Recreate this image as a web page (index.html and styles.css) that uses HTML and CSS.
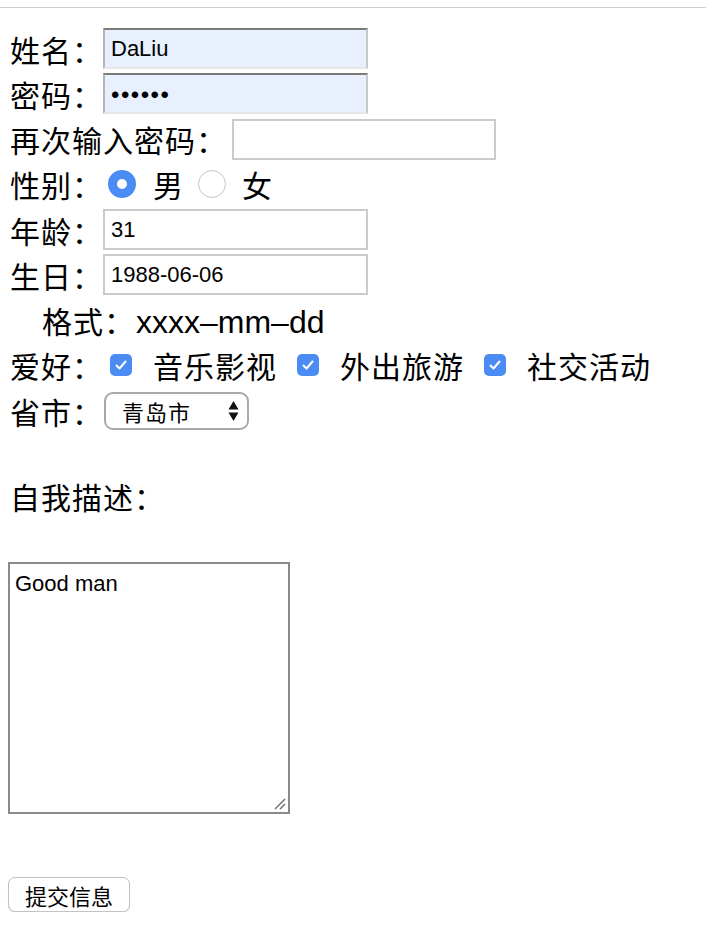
FILE: index.html
```html
<!DOCTYPE html>
<html lang="zh">
<head>
<meta charset="utf-8">
<title>注册</title>
<link rel="stylesheet" href="styles.css">
</head>
<body>
<div class="topline"></div>
<form class="form">
  <div class="row"><span class="lbl">姓名：</span><span class="field auto w-name">DaLiu</span></div>
  <div class="row"><span class="lbl">密码：</span><span class="field auto dots w-name">••••••</span></div>
  <div class="row"><span class="lbl">再次输入密码：</span><span class="field plain w-re"></span></div>
  <div class="row"><span class="lbl">性别：</span>
    <span class="radio on"></span><span class="opt">男</span>
    <span class="radio off"></span><span class="opt">女</span>
  </div>
  <div class="row"><span class="lbl">年龄：</span><span class="field plain w-name">31</span></div>
  <div class="row"><span class="lbl">生日：</span><span class="field plain w-name">1988-06-06</span></div>
  <div class="row"><span class="fmt">格式：<span class="latin">xxxx–mm–dd</span></span></div>
  <div class="row"><span class="lbl">爱好：</span>
    <span class="check"><svg viewBox="0 0 22 22" width="22" height="22"><polyline points="6.5,11.5 9.5,14.5 15.5,7.5" fill="none" stroke="#fff" stroke-width="2" stroke-linecap="round" stroke-linejoin="round"/></svg></span><span class="opt wide">音乐影视</span>
    <span class="check"><svg viewBox="0 0 22 22" width="22" height="22"><polyline points="6.5,11.5 9.5,14.5 15.5,7.5" fill="none" stroke="#fff" stroke-width="2" stroke-linecap="round" stroke-linejoin="round"/></svg></span><span class="opt wide">外出旅游</span>
    <span class="check"><svg viewBox="0 0 22 22" width="22" height="22"><polyline points="6.5,11.5 9.5,14.5 15.5,7.5" fill="none" stroke="#fff" stroke-width="2" stroke-linecap="round" stroke-linejoin="round"/></svg></span><span class="opt wide">社交活动</span>
  </div>
  <div class="row"><span class="lbl">省市：</span>
    <span class="select"><span class="seltext">青岛市</span>
      <svg class="arrows" viewBox="0 0 11 24" width="11" height="24"><polygon points="5.5,2 10.5,10.5 0.5,10.5" fill="#111"/><polygon points="0.5,13.5 10.5,13.5 5.5,22" fill="#111"/></svg>
    </span>
  </div>
  <div class="desc">自我描述：</div>
  <div class="textarea">Good man
    <svg class="grip" viewBox="0 0 14 14" width="14" height="14"><line x1="3" y1="13" x2="13" y2="3" stroke="#666" stroke-width="1.3"/><line x1="8" y1="13" x2="13" y2="8" stroke="#666" stroke-width="1.3"/></svg>
  </div>
  <div class="submit">提交信息</div>
</form>
</body>
</html>
```
FILE: styles.css
```css
html, body {
  margin: 0;
  padding: 0;
  background: #fff;
}
body {
  font-family: "Liberation Sans", "Noto Sans CJK SC", sans-serif;
  color: #000;
}
.topline {
  margin-top: 7px;
  border-top: 1px solid #cfcfcf;
}
.form {
  padding: 18px 0 0 8px;
}
.row {
  display: flex;
  align-items: center;
  height: 45.25px;
  font-size: 30px;
  padding-left: 2px;
  white-space: nowrap;
}
.lbl, .opt, .fmt, .desc {
  font-family: "Noto Sans CJK SC", sans-serif;
  letter-spacing: 1px;
}
.lbl {
  margin-right: 0;
}
.field {
  box-sizing: border-box;
  height: 41px;
  font-size: 22px;
  display: flex;
  align-items: center;
  padding-left: 6px;
}
.w-name { width: 265px; }
.w-re { width: 264px; margin-left: 5px; }
.auto {
  background: #e8f0fe;
  border-top: 2px solid #7b7b7b;
  border-left: 2px solid #b5b5b5;
  border-right: 2px solid #c8c8c8;
  border-bottom: 2px solid #e6e6e6;
}
.dots { font-size: 24px; letter-spacing: 1.5px; padding-top: 2px; }
.plain {
  background: #fff;
  border: 2px solid #cbcbcb;
}
.radio {
  width: 28px;
  height: 28px;
  box-sizing: border-box;
  border-radius: 50%;
  background: #fff;
  margin-left: 5px;
  margin-right: 17px;
}
.radio.off {
  border: 1.5px solid #c6c6c6;
  margin-left: 14px;
  margin-right: 16px;
}
.radio.on {
  border: 9px solid #4a8cf4;
}
.check {
  width: 22px;
  height: 22px;
  border-radius: 5px;
  background: #4a8cf4;
  display: inline-flex;
  margin-left: 7px;
  margin-right: 21px;
}
.opt.wide + .check { margin-left: 20px; }
.fmt {
  padding-left: 32px;
}
.latin {
  font-family: "Liberation Sans", sans-serif;
  font-size: 32px;
  letter-spacing: 0;
  margin-left: 1px;
}
.select {
  box-sizing: border-box;
  width: 145px;
  height: 38px;
  border: 2px solid #a9a9a9;
  border-radius: 9px;
  display: flex;
  align-items: center;
  justify-content: space-between;
  padding: 0 8px 0 16px;
  font-size: 22px;
  margin-left: 1px;
  background: #fff;
}
.seltext { font-family: "Noto Sans CJK SC", sans-serif; letter-spacing: 1px; }
.desc {
  font-size: 30px;
  padding-left: 2px;
  margin-top: 41px;
  height: 45px;
  line-height: 45px;
}
.textarea {
  position: relative;
  box-sizing: border-box;
  margin-top: 43px;
  width: 282px;
  height: 252px;
  border: 2px solid #8a8a8a;
  font-size: 22px;
  padding: 6px 5px;
  line-height: 28px;
}
.grip {
  position: absolute;
  right: 2px;
  bottom: 2px;
}
.submit {
  box-sizing: border-box;
  margin-top: 63px;
  width: 122px;
  height: 35px;
  border: 1.5px solid #c2c2c2;
  border-radius: 7px;
  font-family: "Noto Sans CJK SC", sans-serif;
  font-size: 22px;
  display: flex;
  align-items: center;
  justify-content: center;
  background: #fff;
  box-shadow: 0 1px 1px rgba(0,0,0,0.12);
}
```
